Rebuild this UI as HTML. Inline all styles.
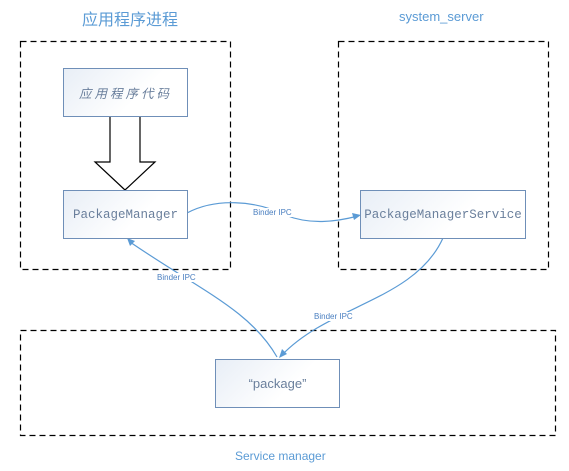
<!DOCTYPE html><html><head><style>body{margin:0;background:#fff;width:569px;height:471px;overflow:hidden;position:relative;font-family:"Liberation Sans","Noto Sans CJK SC",sans-serif}
.t{position:absolute;color:#5b9bd5;white-space:nowrap}
.b{position:absolute;border:1.5px solid #6f8fb8;background:linear-gradient(135deg,#e8eef6,#fff 60%);color:#6a7f9c;display:flex;align-items:center;justify-content:center;box-sizing:border-box;font-family:"Liberation Mono","Noto Sans CJK SC",monospace;font-size:12.5px}
.l{position:absolute;font-size:8px;color:#4a7fc0;background:#fff;padding:0 1px}
</style></head><body>
<svg width="569" height="471" style="position:absolute;left:0;top:0">
<g fill="none" stroke="#000" stroke-dasharray="6,4" stroke-width="1.2">
<rect x="20.5" y="41.5" width="210" height="228"/>
<rect x="338.5" y="41.5" width="210" height="228"/>
<rect x="20.5" y="330.5" width="535" height="105"/>
</g>
<path d="M110 116V162H95L125 190L155 162H140V116Z" fill="#fff" stroke="#000" stroke-width="1.2"/>
<g fill="none" stroke="#5b9bd5" stroke-width="1.2">
<path d="M187 213C215 198 255 200 285 215C310 225 335 222 358 216"/>
<path d="M443 238C415 300 330 305 282 355"/>
<path d="M277 357C250 310 200 290 130 242"/>
</g>
<g fill="#5b9bd5"><path d="M361 215l-9 -2l2 7z"/><path d="M279 358l3 -9l5 5z"/><path d="M127 238l8 3l-5 5z"/></g>
</svg>
<div class="t" style="left:82px;top:6px;font-size:16px">应用程序进程</div>
<div class="t" style="left:399px;top:9px;font-size:13px">system_server</div>
<div class="t" style="left:235px;top:449px;font-size:12px">Service manager</div>
<div class="b" style="left:63px;top:68px;width:125px;height:49px;font-style:italic;letter-spacing:3px">应用程序代码</div>
<div class="b" style="left:63px;top:190px;width:125px;height:49px">PackageManager</div>
<div class="b" style="left:360px;top:190px;width:166px;height:49px">PackageManagerService</div>
<div class="b" style="left:215px;top:359px;width:125px;height:49px;font-family:'Liberation Sans',sans-serif;font-size:13px">“package”</div>
<div class="l" style="left:252px;top:208px">Binder IPC</div>
<div class="l" style="left:156px;top:273px">Binder IPC</div>
<div class="l" style="left:313px;top:312px">Binder IPC</div>
</body></html>
